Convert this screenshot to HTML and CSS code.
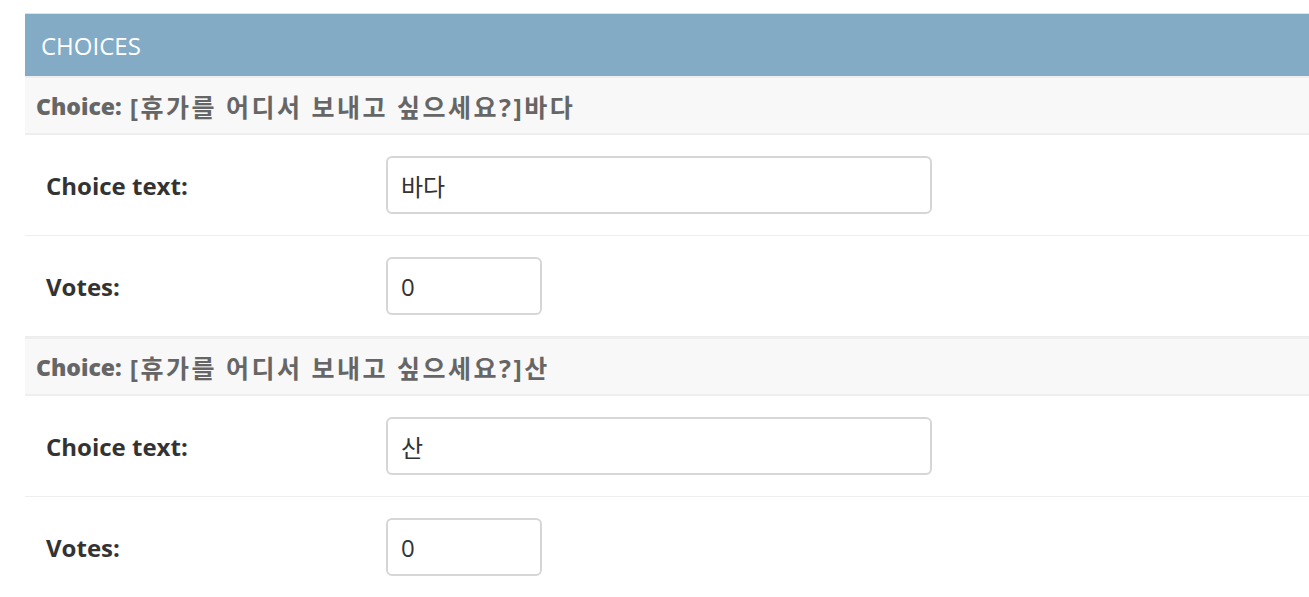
FILE: index.html
```html
<!DOCTYPE html>
<html lang="ko">
<head>
    <meta charset="UTF-8">
    <title>Choices</title>
    <link rel="stylesheet" href="styles.css">
</head>
<body>

<div class="inline-group">
    <h2 class="caption">Choices</h2>

    <!-- Choice 1 -->
    <div class="inline-related">
        <h3><b>Choice:</b> <span class="inline-label">[휴가를 어디서 보내고 싶으세요?]바다</span></h3>
        <div class="form-row">
            <label for="choice_text_0">Choice text:</label>
            <input type="text" id="choice_text_0" class="vTextField" value="바다">
        </div>
        <div class="form-row">
            <label for="votes_0">Votes:</label>
            <input type="text" id="votes_0" class="vIntegerField" value="0">
        </div>
    </div>

    <!-- Choice 2 -->
    <div class="inline-related">
        <h3><b>Choice:</b> <span class="inline-label">[휴가를 어디서 보내고 싶으세요?]산</span></h3>
        <div class="form-row">
            <label for="choice_text_1">Choice text:</label>
            <input type="text" id="choice_text_1" class="vTextField" value="산">
        </div>
        <div class="form-row">
            <label for="votes_1">Votes:</label>
            <input type="text" id="votes_1" class="vIntegerField" value="0">
        </div>
    </div>
</div>

</body>
</html>
```

FILE: styles.css
```css
body {
    font-family: "Open Sans", "Noto Sans CJK KR", sans-serif;
    background-color: #fff;
    color: #333;
    margin: 0;
    padding: 13px 0 0 25px;
    overflow: hidden;
}
.inline-group {
    margin-right: -20px;
}
.caption {
    margin: 0;
    height: 62px;
    padding: 0 16px;
    display: flex;
    align-items: center;
    border-top: 1px solid #dde4e9;
    background-color: #83abc6;
    color: #fff;
    font-size: 24px;
    font-weight: normal;
    text-transform: uppercase;
}
.inline-related h3 {
    margin: 0;
    height: 55px;
    padding: 0 11px;
    display: flex;
    align-items: center;
    gap: 8px;
    background-color: #f8f8f8;
    border-top: 2px solid #eee;
    border-bottom: 2px solid #eee;
    color: #666;
    font-size: 23px;
    font-weight: bold;
    white-space: nowrap;
}
.inline-related h3 .inline-label {
    font-size: 25px;
    letter-spacing: 2.5px;
}
.form-row {
    display: flex;
    align-items: center;
    padding: 21px 21px;
    border-bottom: 1px solid #eee;
}
.form-row label {
    width: 340px;
    color: #333;
    font-size: 24px;
    font-weight: bold;
}
.form-row input {
    box-sizing: border-box;
    height: 58px;
    padding: 0 13px;
    border: 2px solid #d6d6d6;
    border-radius: 6px;
    font-family: "Open Sans", "Noto Sans CJK KR", sans-serif;
    font-size: 24px;
    color: #333;
}
.vTextField {
    width: 546px;
}
.vIntegerField {
    width: 156px;
}
```
